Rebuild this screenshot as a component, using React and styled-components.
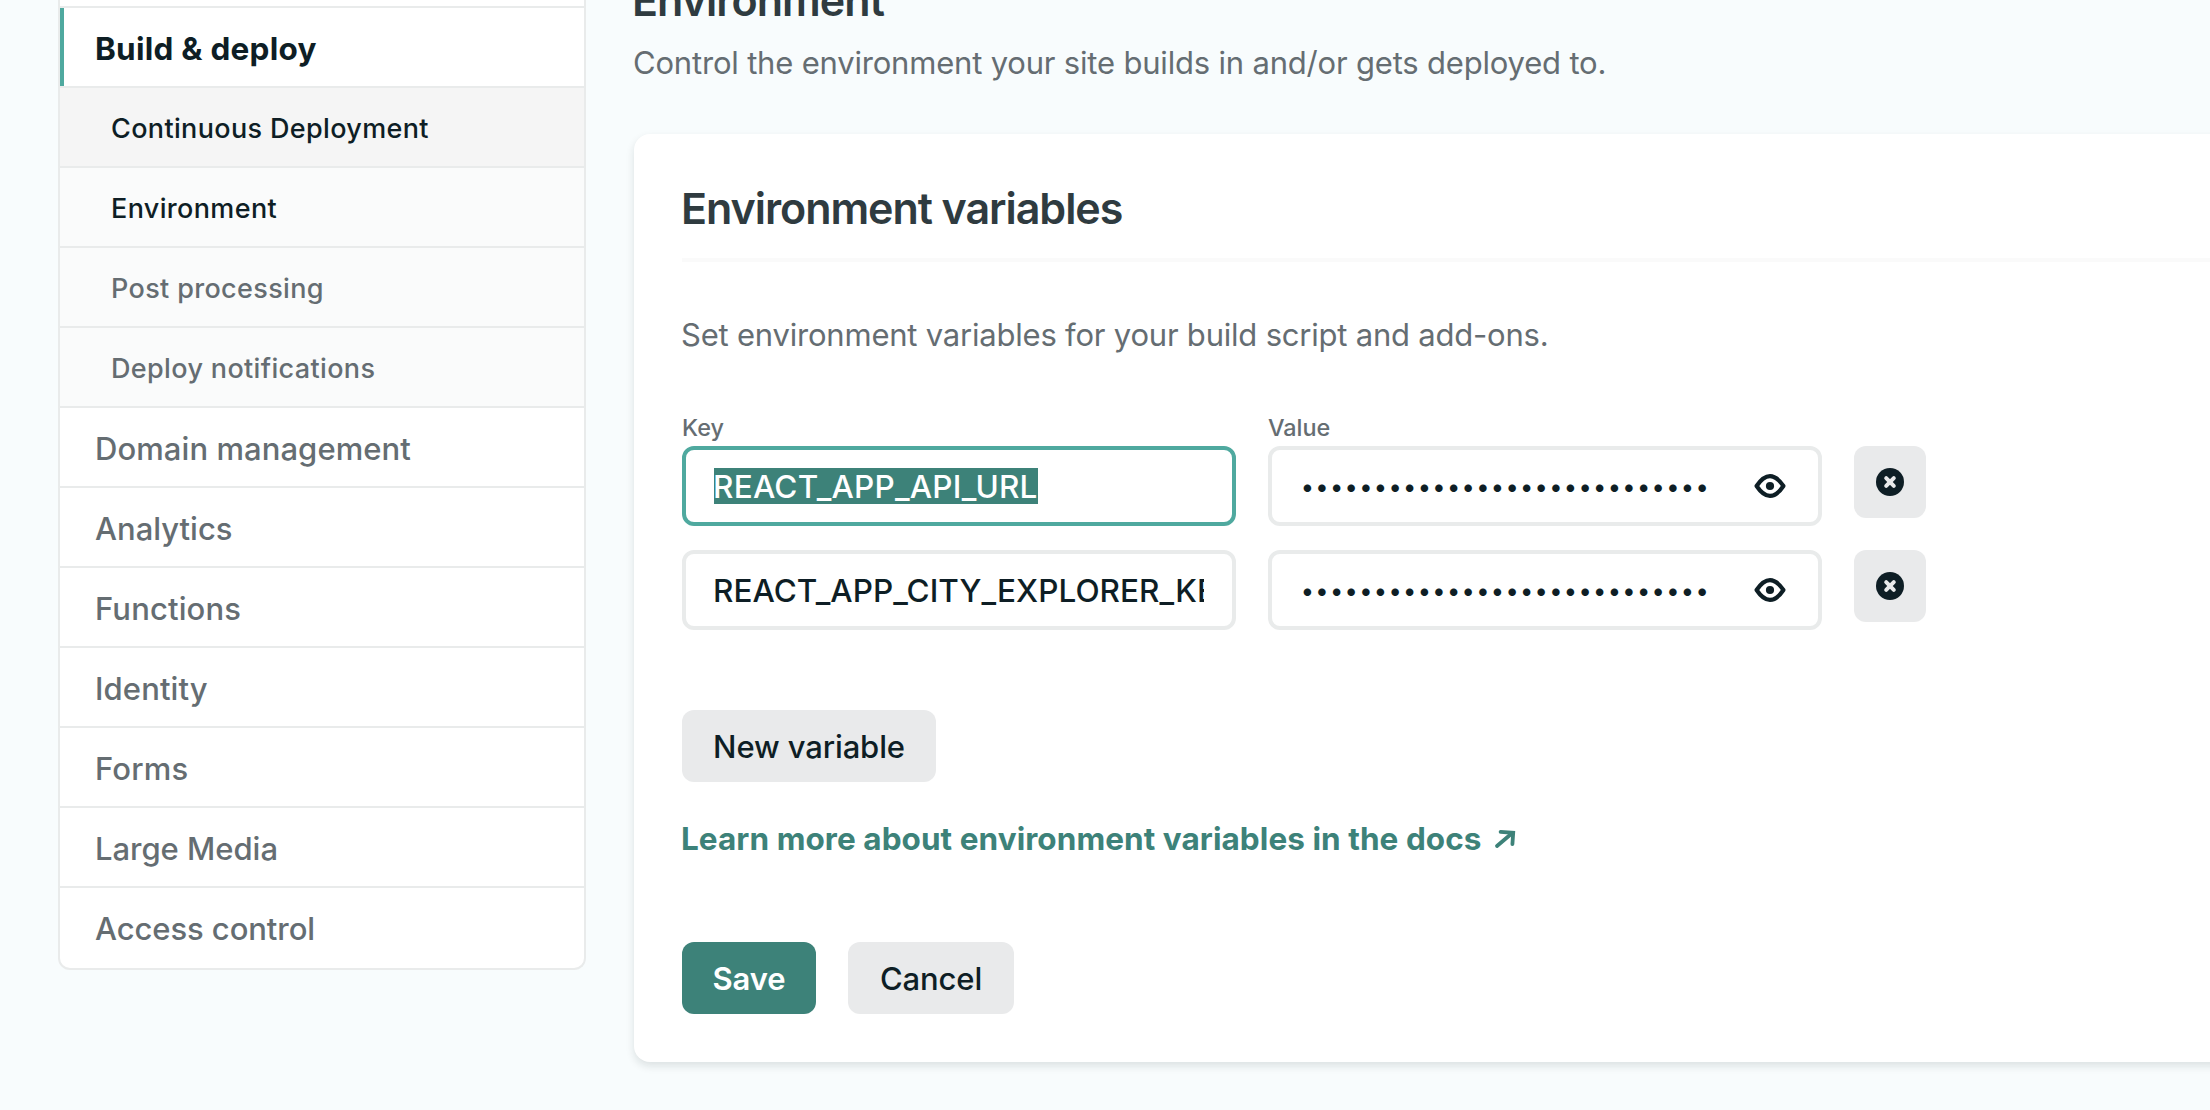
import React from 'react';
import styled, { createGlobalStyle, css } from 'styled-components';

const color = {
  ink: '#0e1e25',
  heading: '#2f3b40',
  muted: '#656d72',
  teal: '#3d8279',
  tealLight: '#4fa99f',
  line: '#e9ebeb',
  button: '#e9eaeb',
};

const GlobalStyle = createGlobalStyle`
  *, *::before, *::after { box-sizing: border-box; }
  body {
    margin: 0;
    background: #f8fcfd;
    color: ${color.ink};
    font-family: Inter, "Liberation Sans", sans-serif;
    overflow: hidden;
  }
`;

const Page = styled.div`
  display: flex;
  align-items: flex-start;
  gap: 48px;
  height: 1110px;
  padding-left: 58px;
  overflow: hidden;
`;

const Sidebar = styled.nav`
  flex: 0 0 528px;
  height: 970px;
  padding-top: 6px;
  background: #fff;
  border: 2px solid ${color.line};
  border-top: 0;
  border-radius: 0 0 12px 12px;
  overflow: hidden;
`;

const NavItem = styled.a`
  display: flex;
  align-items: center;
  height: 80px;
  padding: 3px 0 0 35px;
  border-top: 2px solid ${color.line};
  color: ${color.muted};
  font-size: 31px;
  font-weight: 500;
  letter-spacing: ${(p) => p.$track ?? 0}px;
  white-space: nowrap;
  ${(p) =>
    p.$active &&
    css`
      box-shadow: inset 4px 0 0 ${color.tealLight};
      color: ${color.ink};
      font-size: 31.5px;
      font-weight: 700;
    `}
`;

const SubItem = styled(NavItem)`
  padding: 2px 0 0 51px;
  background: ${(p) => (p.$hovered ? '#f5f5f5' : '#fafbfb')};
  color: ${(p) => (p.$dark ? color.ink : color.muted)};
  font-size: 27px;
  letter-spacing: 0.35px;
`;

const Main = styled.main`
  flex: 0 0 1700px;
  margin-top: -26px;
`;

const Title = styled.h2`
  margin: 0 0 0 -2px;
  color: ${color.heading};
  font-size: 43px;
  font-weight: 600;
  line-height: 52px;
  letter-spacing: -0.95px;
`;

const Text = styled.p`
  margin: ${(p) => p.$top}px 0 0 -1px;
  color: ${color.muted};
  font-size: 31px;
  line-height: 40px;
  letter-spacing: ${(p) => p.$track}px;
`;

const Card = styled.section`
  margin-top: 51px;
  height: 928px;
  padding: 48px;
  background: #fff;
  border-radius: 16px;
  box-shadow: 0 4px 8px rgba(14, 30, 37, 0.12);
`;

const CardTitle = styled.h3`
  margin: 0;
  padding-bottom: 24px;
  border-bottom: 4px solid #fafafa;
  color: ${color.heading};
  font-size: 43px;
  font-weight: 600;
  line-height: 52px;
  letter-spacing: -1.05px;
  text-indent: -1px;
`;

const Fields = styled.div`
  display: grid;
  grid-template-columns: 554px 554px 72px;
  column-gap: 32px;
  row-gap: 24px;
`;

const Labels = styled(Fields)`
  margin-top: 59px;
  padding-bottom: 4px;
`;

const Label = styled.span`
  color: ${color.muted};
  font-size: 23.4px;
  font-weight: 500;
  line-height: 28px;
`;

const Input = styled.div`
  display: flex;
  align-items: center;
  justify-content: space-between;
  height: 80px;
  padding: 0 28px;
  border: 4px solid ${(p) => (p.$focused ? color.tealLight : color.line)};
  border-radius: 12px;
  background: #fff;
  font-size: 31.5px;
  font-weight: 500;
  letter-spacing: 0.24px;
  white-space: nowrap;
`;

const InputText = styled.span`
  overflow: hidden;
  padding-top: 1px;
  line-height: 40px;
  letter-spacing: 0.04px;
  text-indent: -1px;
`;

const Selection = styled.mark`
  display: inline-block;
  height: 36px;
  line-height: 38px;
  background: ${color.teal};
  color: #fff;
  text-indent: -1px;
`;

const Dots = styled.span`
  padding: 2px 0 0 1px;
  font-size: 24px;
  line-height: 40px;
  letter-spacing: 1.82px;
`;

const EyeIcon = styled.svg`
  flex: none;
  width: 32px;
  height: 24px;
  margin-right: 4px;
`;

const Button = styled.button`
  display: flex;
  align-items: center;
  justify-content: center;
  width: ${(p) => p.$width}px;
  height: 72px;
  padding: 1px 0 0;
  border: 0;
  border-radius: 12px;
  background: ${(p) => (p.$primary ? color.teal : color.button)};
  color: ${(p) => (p.$primary ? '#fff' : color.ink)};
  font-family: inherit;
  font-size: 31px;
  font-weight: ${(p) => (p.$primary ? 600 : 500)};
  letter-spacing: -0.12px;
`;

const IconButton = styled(Button)`
  padding: 0;
`;

const NewButton = styled(Button)`
  margin-top: 80px;
`;

const DocsLink = styled.a`
  display: flex;
  align-items: center;
  gap: 12px;
  margin: 37px 0 0 -1px;
  color: ${color.teal};
  font-size: 31.5px;
  font-weight: 700;
  line-height: 40px;
  letter-spacing: 0.06px;
`;

const Actions = styled.div`
  display: flex;
  gap: 32px;
  margin-top: 83px;
`;

const Eye = () => (
  <EyeIcon viewBox="0 0 32 24" fill="none">
    <path
      d="M2.6 12C6.6 6 11 2.1 16 2.1S25.4 6 29.4 12C25.4 18 21 21.9 16 21.9S6.6 18 2.6 12z"
      stroke={color.ink}
      strokeWidth="4.2"
      strokeLinejoin="round"
    />
    <circle cx="16" cy="12" r="4.1" fill={color.ink} />
  </EyeIcon>
);

const Remove = () => (
  <svg width="28" height="28" viewBox="0 0 28 28">
    <circle cx="14" cy="14" r="14" fill={color.ink} />
    <path d="M10.2 10.2l7.6 7.6M17.8 10.2l-7.6 7.6" stroke={color.button} strokeWidth="4" strokeLinecap="round" />
  </svg>
);

const ArrowOut = () => (
  <svg width="22" height="20" viewBox="0 0 22 20" fill="none" stroke={color.teal} strokeWidth="3.8" strokeLinecap="round">
    <path d="M3 17L18 4.2" />
    <path d="M6.6 2.9l12.6.9-.8 11.4" strokeLinejoin="miter" />
  </svg>
);

const sections = [
  { label: 'Domain management', track: 0.07 },
  { label: 'Analytics', track: 0 },
  { label: 'Functions', track: 0.14 },
  { label: 'Identity', track: 0.12 },
  { label: 'Forms', track: 0.15 },
  { label: 'Large Media', track: -0.03 },
  { label: 'Access control', track: -0.08 },
];

const variables = [
  { name: 'REACT_APP_API_URL', focused: true },
  { name: 'REACT_APP_CITY_EXPLORER_KEY' },
];

export default function App() {
  return (
    <>
      <GlobalStyle />
      <Page>
        <Sidebar>
          <NavItem $active $track={0.25}>Build &amp; deploy</NavItem>
          <SubItem $dark $hovered>Continuous Deployment</SubItem>
          <SubItem $dark>Environment</SubItem>
          <SubItem>Post processing</SubItem>
          <SubItem>Deploy notifications</SubItem>
          {sections.map((s) => (
            <NavItem key={s.label} $track={s.track}>{s.label}</NavItem>
          ))}
        </Sidebar>
        <Main>
          <Title>Environment</Title>
          <Text $top={17} $track={-0.19}>
            Control the environment your site builds in and/or gets deployed to.
          </Text>
          <Card>
            <CardTitle>Environment variables</CardTitle>
            <Text $top={53} $track={-0.21}>
              Set environment variables for your build script and add-ons.
            </Text>
            <Labels>
              <Label>Key</Label>
              <Label>Value</Label>
            </Labels>
            <Fields>
              {variables.map((v) => (
                <React.Fragment key={v.name}>
                  <Input $focused={v.focused}>
                    {v.focused ? <Selection>{v.name}</Selection> : <InputText>{v.name}</InputText>}
                  </Input>
                  <Input>
                    <Dots>{'•'.repeat(28)}</Dots>
                    <Eye />
                  </Input>
                  <IconButton $width={72} aria-label="Remove">
                    <Remove />
                  </IconButton>
                </React.Fragment>
              ))}
            </Fields>
            <NewButton $width={254}>New variable</NewButton>
            <DocsLink>
              Learn more about environment variables in the docs
              <ArrowOut />
            </DocsLink>
            <Actions>
              <Button $width={134} $primary>Save</Button>
              <Button $width={166}>Cancel</Button>
            </Actions>
          </Card>
        </Main>
      </Page>
    </>
  );
}
